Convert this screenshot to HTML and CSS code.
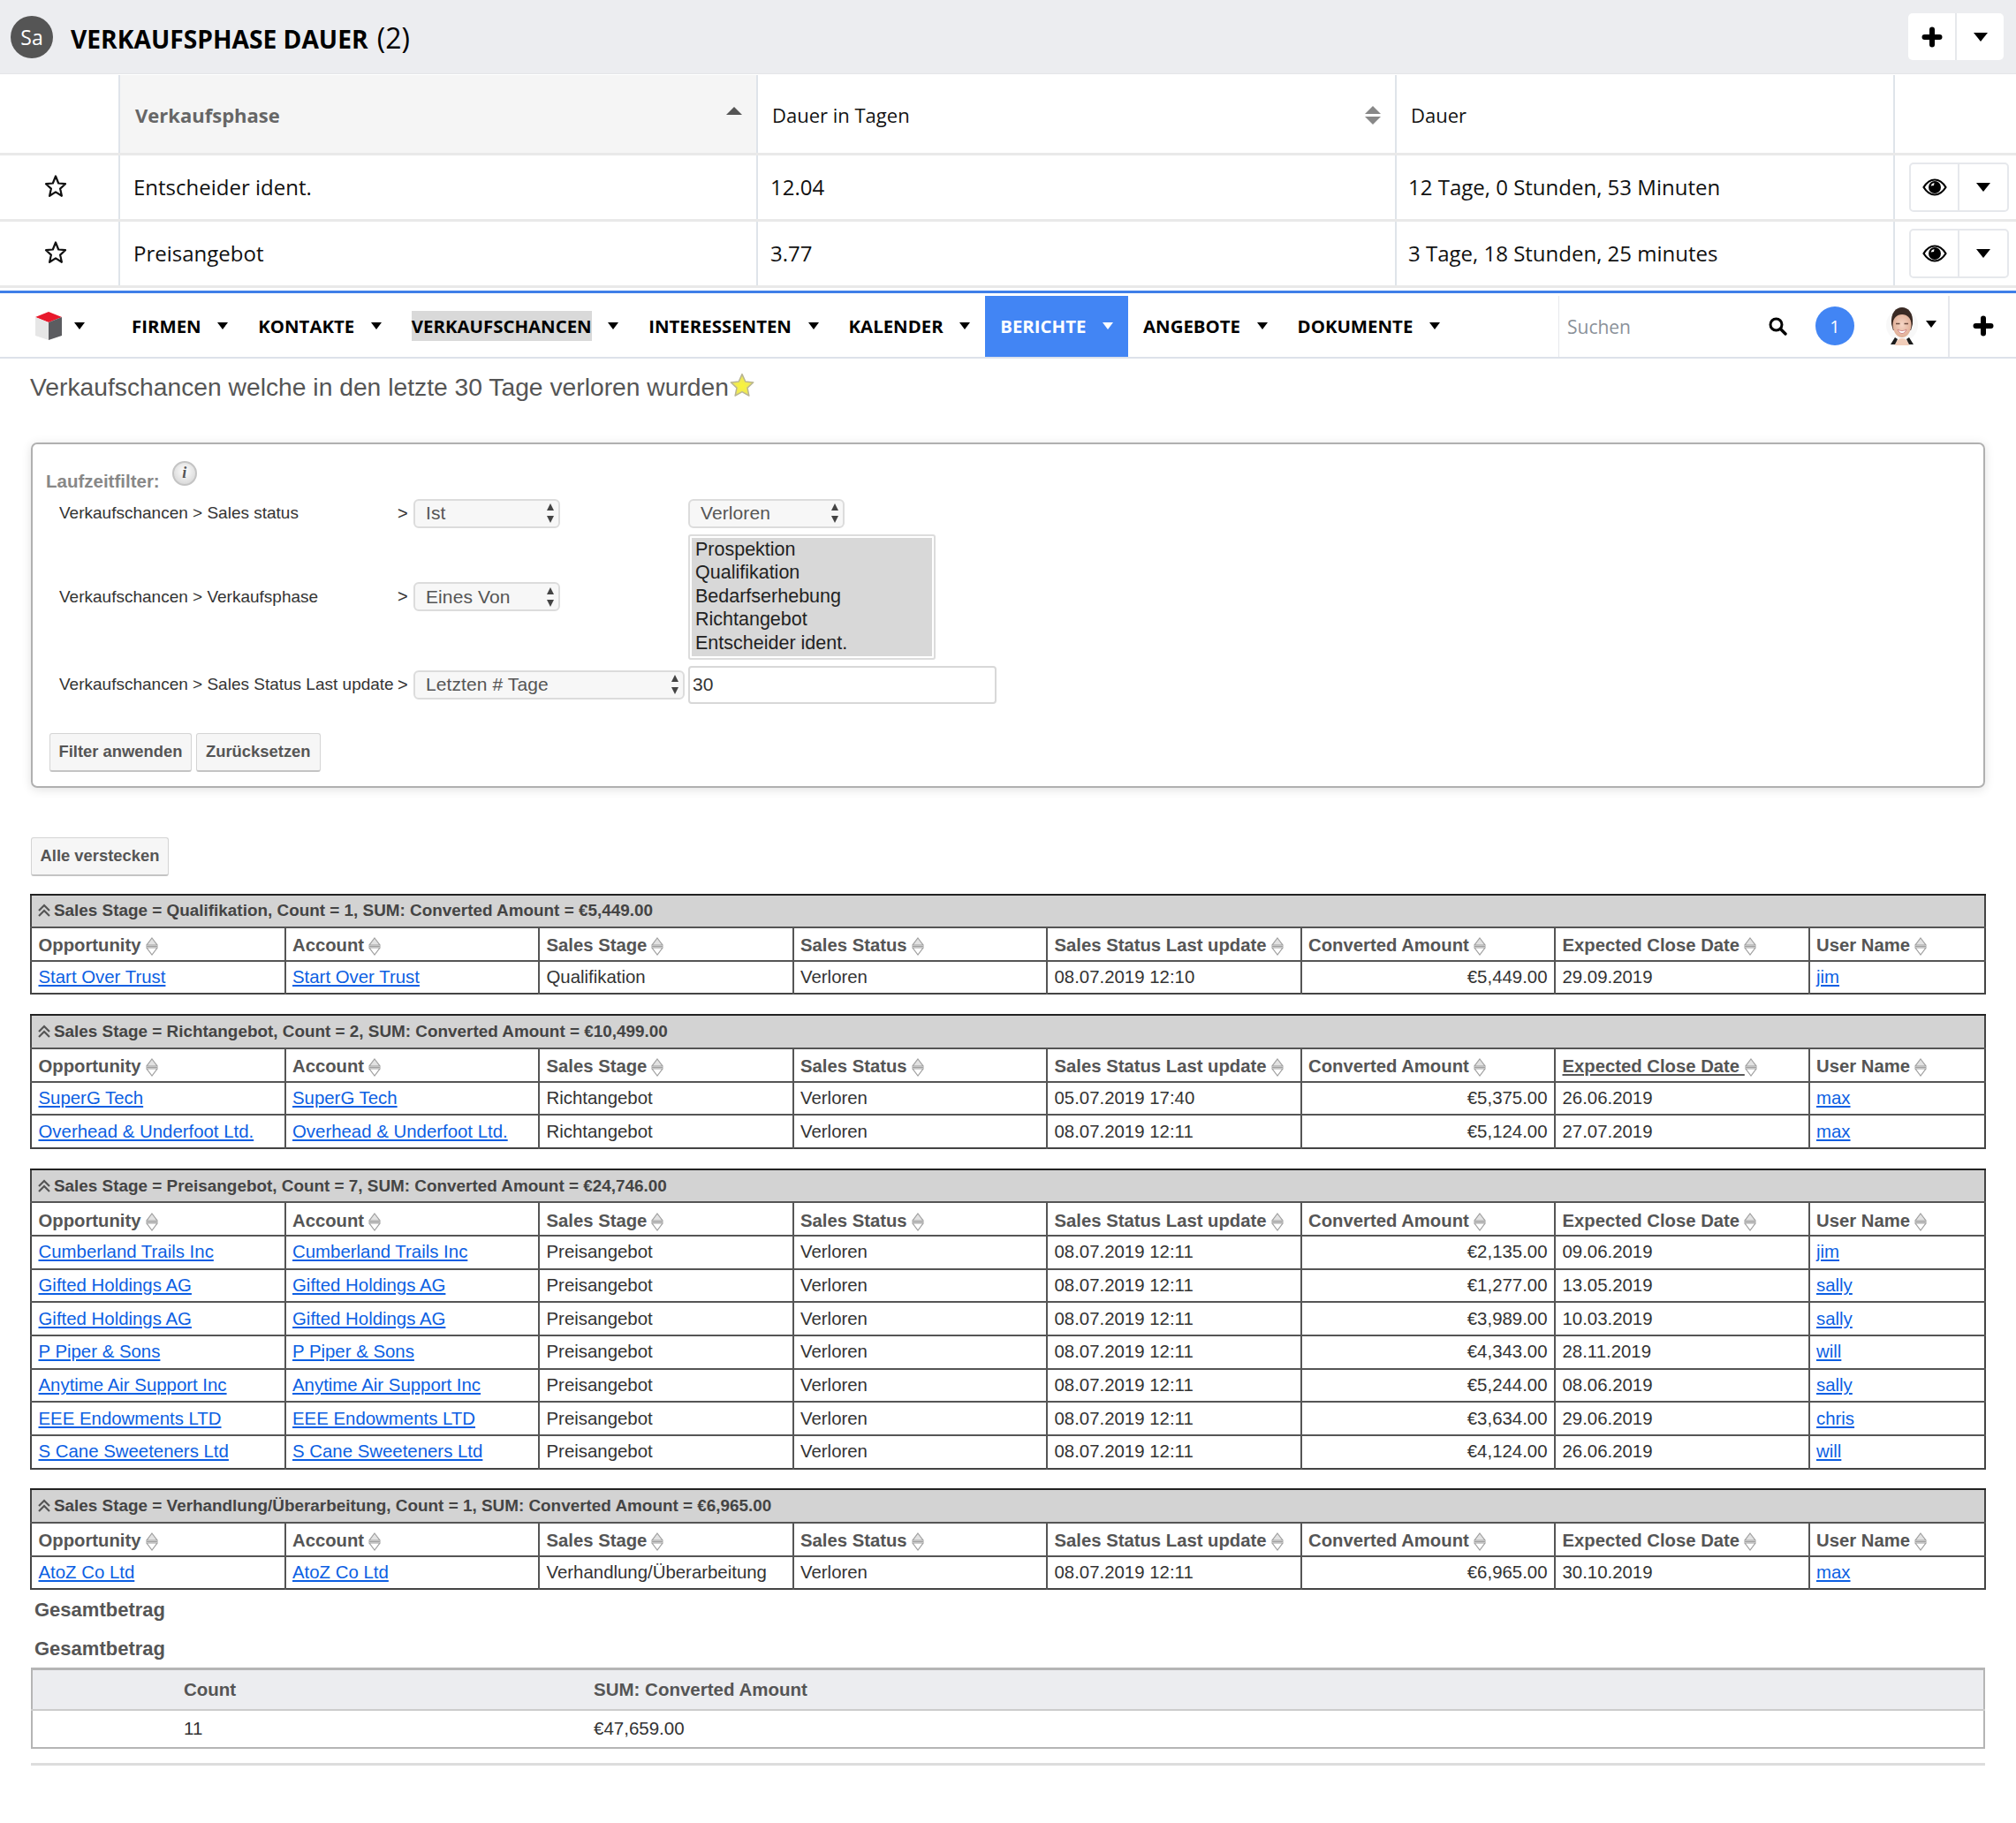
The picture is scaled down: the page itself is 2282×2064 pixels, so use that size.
FILE: index.html
```html
<!DOCTYPE html>
<html lang="de">
<head>
<meta charset="utf-8">
<title>Verkaufschancen</title>
<link rel="stylesheet" href="styles.css">
</head>
<body>
<svg class="defs" width="0" height="0">
  <defs>
    <radialGradient id="goldfill" cx="50%" cy="55%" r="55%"><stop offset="0" stop-color="#f9f43a"/><stop offset=".7" stop-color="#eee85a"/><stop offset="1" stop-color="#d8d48a"/></radialGradient>
    <radialGradient id="skin" cx="50%" cy="45%" r="65%"><stop offset="0" stop-color="#f5d6c6"/><stop offset="1" stop-color="#dca68c"/></radialGradient>
  </defs>
  <symbol id="star" viewBox="0 0 26 28"><path d="M13 2.500l3.200 8 7.800.7-5.900 5.400 1.800 8.200-6.900-4.400-6.900 4.400 1.800-8.200L2 11.200l7.800-.7z" fill="none" stroke="#111" stroke-width="2.200" stroke-linejoin="round"/></symbol>
  <symbol id="plus" viewBox="0 0 24 24"><path d="M12 3.500v17M3.500 12h17" fill="none" stroke="#000" stroke-width="6" stroke-linecap="round"/></symbol>
  <symbol id="eye" viewBox="0 0 28 20"><path d="M1.500 10C5 4.300 9.300 1.500 14 1.500S23 4.300 26.500 10C23 15.700 18.700 18.500 14 18.500S5 15.700 1.500 10z" fill="#fff" stroke="#000" stroke-width="2.200"/><circle cx="14" cy="10" r="7" fill="#000"/><path d="M9.500 8.500a5 5 0 0 1 4-3.500l-.5 3z" fill="#fff"/></symbol>
  <symbol id="sort" viewBox="0 0 14 21"><path d="M7 1L13 9H1z" fill="#e2e2e2" stroke="#a0a0a0" stroke-width="1.200"/><path d="M.5 10.500h13" stroke="#a0a0a0" stroke-width="1.400"/><path d="M1 12h12L7 20z" fill="#fff" stroke="#a0a0a0" stroke-width="1.200"/></symbol>
  <symbol id="chev" viewBox="0 0 16 18"><path d="M2 9l6-6 6 6M2 15l6-6 6 6" fill="none" stroke="#555" stroke-width="2.200"/></symbol>
  <symbol id="updown" viewBox="0 0 10 24"><path d="M5 1l4 8H1zM5 23l-4-8h8z" fill="#444"/></symbol>
</svg>

<header class="hd">
  <span class="avatar">Sa</span>
  <h2 class="hd-title"><b>VERKAUFSPHASE DAUER</b> (2)</h2>
  <div class="btn-group hd-btns">
    <span class="btn-part wide"><svg class="ico-plus"><use href="#plus"/></svg></span>
    <span class="btn-part"><i class="caret"></i></span>
  </div>
</header>

<table class="list">
  <colgroup><col class="c1"><col class="c2"><col class="c3"><col class="c4"><col class="c5"></colgroup>
  <thead>
    <tr>
      <th class="blank"></th>
      <th class="sorted"><span class="th-in">Verkaufsphase<i class="tri-up"></i></span></th>
      <th><span class="th-in">Dauer in Tagen<span class="both"><i class="tri-up grey"></i><i class="tri-down grey"></i></span></span></th>
      <th>Dauer</th>
      <th></th>
    </tr>
  </thead>
  <tbody>
    <tr>
      <td class="blank"><svg class="ico-star"><use href="#star"/></svg></td>
      <td>Entscheider ident.</td>
      <td>12.04</td>
      <td>12 Tage, 0 Stunden, 53 Minuten</td>
      <td class="act"><div class="btn-group row-btns"><span class="btn-part wide"><svg class="ico-eye"><use href="#eye"/></svg></span><span class="btn-part"><i class="caret"></i></span></div></td>
    </tr>
    <tr>
      <td class="blank"><svg class="ico-star"><use href="#star"/></svg></td>
      <td>Preisangebot</td>
      <td>3.77</td>
      <td>3 Tage, 18 Stunden, 25 minutes</td>
      <td class="act"><div class="btn-group row-btns"><span class="btn-part wide"><svg class="ico-eye"><use href="#eye"/></svg></span><span class="btn-part"><i class="caret"></i></span></div></td>
    </tr>
  </tbody>
</table>

<nav class="nav">
  <div class="brand">
    <svg class="logo" viewBox="0 0 34 34"><path d="M17 1L32 7 17 13 2 7z" fill="#e8192c"/><path d="M2 7l15 6v20L2 28z" fill="#e6e6e6"/><path d="M32 7v21l-15 5V13z" fill="#5b5c60"/></svg>
    <i class="caret"></i>
  </div>
  <a class="item"><span>FIRMEN</span><i class="caret"></i></a>
  <a class="item"><span>KONTAKTE</span><i class="caret"></i></a>
  <a class="item"><span class="mark">VERKAUFSCHANCEN</span><i class="caret"></i></a>
  <a class="item"><span>INTERESSENTEN</span><i class="caret"></i></a>
  <a class="item"><span>KALENDER</span><i class="caret"></i></a>
  <a class="item active"><span>BERICHTE</span><i class="caret"></i></a>
  <a class="item"><span>ANGEBOTE</span><i class="caret"></i></a>
  <a class="item"><span>DOKUMENTE</span><i class="caret"></i></a>
  <div class="search">
    <span class="placeholder">Suchen</span>
    <svg class="ico-search" viewBox="0 0 22 22"><circle cx="9.500" cy="9.500" r="6.500" fill="none" stroke="#000" stroke-width="3"/><path d="M14.500 14.500L20 20" stroke="#000" stroke-width="3.400" stroke-linecap="round"/></svg>
    <span class="badge">1</span>
    <svg class="face" viewBox="0 0 36 44">
      <circle cx="18" cy="21" r="18" fill="#f8f8f8"/>
      <path d="M6 20C5 7 11 1 18 1s13 6 12 19l-2 7H8z" fill="#3a2a24"/>
      <path d="M7.500 20C8 13 12 9 18 9s10 4 10.500 11c0 9-5 15-10.500 15S7.500 29 7.500 20z" fill="url(#skin)"/>
      <path d="M11 19.500h4.500M20.500 19.500H25" stroke="#6b4a3e" stroke-width="1.600"/>
      <path d="M13 26c3 2 7 2 10 0-1 3-3 4.500-5 4.500s-4-1.500-5-4.500z" fill="#fff" stroke="#c8737a" stroke-width=".8"/>
      <path d="M10 44c1-5 4-8 8-8s7 3 8 8z" fill="#f1cdb9"/>
      <path d="M5 43l5-8 3 2-3 6zM31 43l-5-8-3 2 3 6z" fill="#1c1c1c"/>
    </svg>
    <i class="caret"></i>
  </div>
  <div class="nav-plus"><svg class="ico-plus"><use href="#plus"/></svg></div>
</nav>

<main class="main">
  <h1 class="title">Verkaufschancen welche in den letzte 30 Tage verloren wurden<svg class="gold" viewBox="0 0 26 26"><path d="M13 1.500l3.500 7.800 8.300.9-6.200 5.700 1.700 8.300-7.300-4.200-7.300 4.200 1.700-8.300L1.200 10.200l8.300-.9z" fill="url(#goldfill)" stroke="#b9b592" stroke-width="1.400" stroke-linejoin="round"/></svg></h1>

  <section class="card">
    <div class="rt"><b>Laufzeitfilter:</b><span class="info">i</span></div>
    <div class="fgrid">
      <span class="flabel">Verkaufschancen &gt; Sales status</span><span class="gt">&gt;</span>
      <div class="sel s-small"><span>Ist</span><svg class="updown"><use href="#updown"/></svg></div>
      <div class="sel s-val"><span>Verloren</span><svg class="updown"><use href="#updown"/></svg></div>

      <span class="flabel">Verkaufschancen &gt; Verkaufsphase</span><span class="gt">&gt;</span>
      <div class="sel s-small"><span>Eines Von</span><svg class="updown"><use href="#updown"/></svg></div>
      <div class="multi"><div class="multi-in"><span>Prospektion</span><span>Qualifikation</span><span>Bedarfserhebung</span><span>Richtangebot</span><span>Entscheider ident.</span></div></div>

      <span class="flabel">Verkaufschancen &gt; Sales Status Last update</span><span class="gt">&gt;</span>
      <div class="sel"><span>Letzten # Tage</span><svg class="updown"><use href="#updown"/></svg></div>
      <div class="inp">30</div>
    </div>
    <div class="actions"><span class="gbtn">Filter anwenden</span><span class="gbtn">Zurücksetzen</span></div>
  </section>

  <span class="gbtn hide">Alle verstecken</span>

  <table class="rep">
    <colgroup><col class="r"><col class="r"><col class="r"><col class="r"><col class="r"><col class="r"><col class="r"><col class="rl"></colgroup>
    <tr class="grp"><td colspan="8"><svg class="chev"><use href="#chev"/></svg>Sales Stage = Qualifikation, Count = 1, SUM: Converted Amount = €5,449.00</td></tr>
    <tr class="hr"><th>Opportunity<svg class="sort"><use href="#sort"/></svg></th><th>Account<svg class="sort"><use href="#sort"/></svg></th><th>Sales Stage<svg class="sort"><use href="#sort"/></svg></th><th>Sales Status<svg class="sort"><use href="#sort"/></svg></th><th>Sales Status Last update<svg class="sort"><use href="#sort"/></svg></th><th>Converted Amount<svg class="sort"><use href="#sort"/></svg></th><th>Expected Close Date<svg class="sort"><use href="#sort"/></svg></th><th>User Name<svg class="sort"><use href="#sort"/></svg></th></tr>
    <tr><td><a>Start Over Trust</a></td><td><a>Start Over Trust</a></td><td>Qualifikation</td><td>Verloren</td><td>08.07.2019 12:10</td><td class="num">€5,449.00</td><td>29.09.2019</td><td><a>jim</a></td></tr>
  </table>

  <table class="rep">
    <colgroup><col class="r"><col class="r"><col class="r"><col class="r"><col class="r"><col class="r"><col class="r"><col class="rl"></colgroup>
    <tr class="grp"><td colspan="8"><svg class="chev"><use href="#chev"/></svg>Sales Stage = Richtangebot, Count = 2, SUM: Converted Amount = €10,499.00</td></tr>
    <tr class="hr"><th>Opportunity<svg class="sort"><use href="#sort"/></svg></th><th>Account<svg class="sort"><use href="#sort"/></svg></th><th>Sales Stage<svg class="sort"><use href="#sort"/></svg></th><th>Sales Status<svg class="sort"><use href="#sort"/></svg></th><th>Sales Status Last update<svg class="sort"><use href="#sort"/></svg></th><th>Converted Amount<svg class="sort"><use href="#sort"/></svg></th><th><u>Expected Close Date </u><svg class="sort tight"><use href="#sort"/></svg></th><th>User Name<svg class="sort"><use href="#sort"/></svg></th></tr>
    <tr><td><a>SuperG Tech</a></td><td><a>SuperG Tech</a></td><td>Richtangebot</td><td>Verloren</td><td>05.07.2019 17:40</td><td class="num">€5,375.00</td><td>26.06.2019</td><td><a>max</a></td></tr>
    <tr><td><a>Overhead &amp; Underfoot Ltd.</a></td><td><a>Overhead &amp; Underfoot Ltd.</a></td><td>Richtangebot</td><td>Verloren</td><td>08.07.2019 12:11</td><td class="num">€5,124.00</td><td>27.07.2019</td><td><a>max</a></td></tr>
  </table>

  <table class="rep">
    <colgroup><col class="r"><col class="r"><col class="r"><col class="r"><col class="r"><col class="r"><col class="r"><col class="rl"></colgroup>
    <tr class="grp"><td colspan="8"><svg class="chev"><use href="#chev"/></svg>Sales Stage = Preisangebot, Count = 7, SUM: Converted Amount = €24,746.00</td></tr>
    <tr class="hr"><th>Opportunity<svg class="sort"><use href="#sort"/></svg></th><th>Account<svg class="sort"><use href="#sort"/></svg></th><th>Sales Stage<svg class="sort"><use href="#sort"/></svg></th><th>Sales Status<svg class="sort"><use href="#sort"/></svg></th><th>Sales Status Last update<svg class="sort"><use href="#sort"/></svg></th><th>Converted Amount<svg class="sort"><use href="#sort"/></svg></th><th>Expected Close Date<svg class="sort"><use href="#sort"/></svg></th><th>User Name<svg class="sort"><use href="#sort"/></svg></th></tr>
    <tr><td><a>Cumberland Trails Inc</a></td><td><a>Cumberland Trails Inc</a></td><td>Preisangebot</td><td>Verloren</td><td>08.07.2019 12:11</td><td class="num">€2,135.00</td><td>09.06.2019</td><td><a>jim</a></td></tr>
    <tr><td><a>Gifted Holdings AG</a></td><td><a>Gifted Holdings AG</a></td><td>Preisangebot</td><td>Verloren</td><td>08.07.2019 12:11</td><td class="num">€1,277.00</td><td>13.05.2019</td><td><a>sally</a></td></tr>
    <tr><td><a>Gifted Holdings AG</a></td><td><a>Gifted Holdings AG</a></td><td>Preisangebot</td><td>Verloren</td><td>08.07.2019 12:11</td><td class="num">€3,989.00</td><td>10.03.2019</td><td><a>sally</a></td></tr>
    <tr><td><a>P Piper &amp; Sons</a></td><td><a>P Piper &amp; Sons</a></td><td>Preisangebot</td><td>Verloren</td><td>08.07.2019 12:11</td><td class="num">€4,343.00</td><td>28.11.2019</td><td><a>will</a></td></tr>
    <tr><td><a>Anytime Air Support Inc</a></td><td><a>Anytime Air Support Inc</a></td><td>Preisangebot</td><td>Verloren</td><td>08.07.2019 12:11</td><td class="num">€5,244.00</td><td>08.06.2019</td><td><a>sally</a></td></tr>
    <tr><td><a>EEE Endowments LTD</a></td><td><a>EEE Endowments LTD</a></td><td>Preisangebot</td><td>Verloren</td><td>08.07.2019 12:11</td><td class="num">€3,634.00</td><td>29.06.2019</td><td><a>chris</a></td></tr>
    <tr><td><a>S Cane Sweeteners Ltd</a></td><td><a>S Cane Sweeteners Ltd</a></td><td>Preisangebot</td><td>Verloren</td><td>08.07.2019 12:11</td><td class="num">€4,124.00</td><td>26.06.2019</td><td><a>will</a></td></tr>
  </table>

  <table class="rep last">
    <colgroup><col class="r"><col class="r"><col class="r"><col class="r"><col class="r"><col class="r"><col class="r"><col class="rl"></colgroup>
    <tr class="grp"><td colspan="8"><svg class="chev"><use href="#chev"/></svg>Sales Stage = Verhandlung/Überarbeitung, Count = 1, SUM: Converted Amount = €6,965.00</td></tr>
    <tr class="hr"><th>Opportunity<svg class="sort"><use href="#sort"/></svg></th><th>Account<svg class="sort"><use href="#sort"/></svg></th><th>Sales Stage<svg class="sort"><use href="#sort"/></svg></th><th>Sales Status<svg class="sort"><use href="#sort"/></svg></th><th>Sales Status Last update<svg class="sort"><use href="#sort"/></svg></th><th>Converted Amount<svg class="sort"><use href="#sort"/></svg></th><th>Expected Close Date<svg class="sort"><use href="#sort"/></svg></th><th>User Name<svg class="sort"><use href="#sort"/></svg></th></tr>
    <tr><td><a>AtoZ Co Ltd</a></td><td><a>AtoZ Co Ltd</a></td><td>Verhandlung/Überarbeitung</td><td>Verloren</td><td>08.07.2019 12:11</td><td class="num">€6,965.00</td><td>30.10.2019</td><td><a>max</a></td></tr>
  </table>

  <h3 class="sum-h">Gesamtbetrag</h3>
  <h3 class="sum-h">Gesamtbetrag</h3>
  <table class="sum">
    <colgroup><col class="s1"><col class="s2"><col></colgroup>
    <tr><th>Count</th><th>SUM: Converted Amount</th><th></th></tr>
    <tr><td>11</td><td>€47,659.00</td><td></td></tr>
  </table>
  <hr class="rule">
</main>
</body>
</html>
```

FILE: styles.css
```css
* { box-sizing: border-box; }
html, body { margin: 0; padding: 0; background: #fff; }
body { font-family: "Liberation Sans", Arial, sans-serif; color: #333; width: 2282px; }
.defs { position: absolute; }
i { display: inline-block; font-style: normal; }

.caret { width: 0; height: 0; border-left: 6.500px solid transparent; border-right: 6.500px solid transparent; border-top: 8px solid #000; }

/* top record header */
.hd { height: 84px; background: #ecedf0; display: flex; align-items: center; padding: 0 14px 0 12px; border-bottom: 1px solid #e4e5e8; }
.avatar { width: 48px; height: 48px; border-radius: 50%; background: #555; color: #fff; font: 400 23px "Open Sans", sans-serif; display: flex; align-items: center; justify-content: center; margin-top: 1px; }
.hd-title { margin: 2px 0 0 20px; font: 400 32px "Open Sans", sans-serif; color: #000; flex: 1; }
.hd-title b { font-weight: 700; font-size: 28.200px; margin-right: 2px; }
.btn-group { display: flex; background: #fff; border-radius: 5px; }
.btn-part { width: 53px; display: flex; align-items: center; justify-content: center; }
.btn-part.wide { width: 55px; border-right: 2px solid #e6e8ec; }
.btn-part .caret { border-left-width: 8.500px; border-right-width: 8.500px; border-top-width: 10px; }
.hd-btns { height: 53px; width: 108px; }
.ico-plus { width: 24px; height: 24px; display: block; }

/* list view */
.list { width: 2282px; border-collapse: collapse; table-layout: fixed; font-family: "Open Sans", sans-serif; color: #111; margin-top: 1px; }
.c1 { width: 135px; } .c2 { width: 722px; } .c3 { width: 723px; } .c4 { width: 564px; } .c5 { width: 138px; }
.list th { height: 89px; text-align: left; font-weight: 400; font-size: 22px; padding: 2px 16px 0; border-left: 2px solid #dfe4ea; border-bottom: 3px solid #e9e9e9; }
.list th.blank, .list td.blank { border-left: 0; padding: 0; }
.list th.sorted { background: #f5f5f5; color: #666; font-weight: 700; padding-left: 17px; }
.th-in { display: flex; align-items: center; justify-content: space-between; }
.tri-up { width: 0; height: 0; border-left: 9px solid transparent; border-right: 9px solid transparent; border-top: 0; border-bottom: 9px solid #555; margin-top: -8px; }
.tri-down { width: 0; height: 0; border-left: 9px solid transparent; border-right: 9px solid transparent; border-top: 9px solid #555; }
.both { display: flex; flex-direction: column; gap: 3px; margin-top: 2px; }
.both .tri-up { margin: 0; }
.grey.tri-up { border-bottom-color: #888; } .grey.tri-down { border-top-color: #888; }
.list td { height: 75px; font-size: 24px; padding: 0 14px; border-left: 2px solid #dfe4ea; border-bottom: 3px solid #e9e9e9; }
.list td:nth-child(2) { padding-left: 15px; }
.list td:nth-child(4) { padding-left: 13px; }
.ico-star { width: 26px; height: 28px; display: block; margin: -2px 0 0 50px; }
.list td.act { padding: 0 0 0 16px; }
.row-btns { height: 56px; width: 113px; border: 2px solid #e6e8ec; }
.row-btns .btn-part { width: 54px; }
.row-btns .btn-part.wide { width: 55px; }
.ico-eye { width: 28px; height: 20px; display: block; }

/* nav */
.nav { margin-top: 3px; height: 77px; border-top: 3px solid #3f7fe8; border-bottom: 2px solid #dde2ea; display: flex; align-items: stretch; padding: 3px 0 0; font-family: "Open Sans", sans-serif; }
.brand { width: 132px; display: flex; align-items: center; padding-left: 38px; gap: 12px; }
.logo { width: 34px; height: 34px; }
.item { display: flex; align-items: center; padding: 0 17px; font-size: 20.400px; font-weight: 700; color: #000; }
.item .caret { margin-left: 18.600px; }
.mark { background: #d9d9d9; padding: 3px 0; }
.item.active { background: #4285f4; color: #fff; }
.item.active .caret { border-top-color: #fff; }
.search { margin-left: auto; width: 441px; display: flex; align-items: center; border-left: 1px solid #e6e8ec; padding-left: 9px; position: relative; }
.placeholder { font-size: 21px; color: #8a9199; width: 227px; padding-top: 2px; }
.ico-search { width: 22px; height: 22px; }
.badge { width: 44px; height: 44px; border-radius: 50%; background: #4285f4; color: #fff; font-size: 20px; display: flex; align-items: center; justify-content: center; margin-left: 32px; }
.face { width: 36px; height: 44px; margin-left: 36px; }
.search .caret { margin-left: 9px; margin-top: -4px; }
.nav-plus { width: 77px; border-left: 2px solid #e6e8ec; display: flex; align-items: center; justify-content: center; }

/* main */
.main { padding: 0 35px; }
.title { margin: 14px 0 0 -1px; font-size: 28.250px; font-weight: 400; color: #555; line-height: 36px; display: flex; align-items: flex-start; }
.gold { width: 28px; height: 28px; margin: 2px 0 0 1px; }
.card { margin-top: 45px; height: 391px; border: 2px solid #b0b0b0; border-radius: 7px; box-shadow: 0 2px 12px rgba(0,0,0,.12); padding: 20px 16px 0 15px; }
.rt { display: flex; align-items: flex-start; height: 42px; gap: 14px; font-size: 20.500px; color: #888; }
.rt b { margin-top: 10px; }
.info { width: 28px; height: 28px; margin-top: -1px; border-radius: 50%; background: radial-gradient(circle at 50% 40%, #fff, #cfcfcf); border: 2px solid #c4c4c4; color: #555; font: italic 700 18px "Liberation Serif", serif; display: flex; align-items: center; justify-content: center; }
.fgrid { display: grid; grid-template-columns: 383px 18px 307px 350px; column-gap: 0; row-gap: 7px; align-items: center; padding-left: 15px; }
.flabel { font-size: 19px; color: #333; }
.gt { font-size: 20px; color: #333; }
.sel { height: 33px; background: #f7f7f7; border: 2px solid #dcdcdc; border-radius: 6px; font-size: 21px; letter-spacing: .1px; color: #555; display: flex; align-items: center; justify-content: space-between; padding: 0 4px 0 12px; }
.s-small { width: 166px; }
.s-val { width: 177px; }
.fgrid > :nth-child(4n) { margin-left: 4px; }
.updown { width: 10px; height: 24px; }
.multi { width: 280px; height: 142px; border: 2px solid #dcdcdc; border-radius: 3px; padding: 2px; }
.multi-in { height: 100%; background: #d8d8d8; padding: 0 4px; font-size: 21.500px; color: #222; display: flex; flex-direction: column; }
.multi-in span { line-height: 26.600px; }
.inp { width: 349px; height: 43px; border: 2px solid #d8d8d8; border-radius: 4px; font-size: 21px; color: #333; display: flex; align-items: center; padding-left: 3px; }
.actions { display: flex; gap: 5px; margin-top: 33px; padding-left: 4px; }
.gbtn { display: inline-flex; align-items: center; height: 44px; padding: 0 9.500px; background: #f6f6f6; border: 1px solid #d4d4d4; border-bottom: 2px solid #c4c4c4; border-radius: 3px; font-size: 18.400px; font-weight: 700; color: #555; }
.gbtn + .gbtn { padding: 0 10px; }
.hide { margin-top: 56px; display: flex; width: 156px; justify-content: center; padding: 0; }

/* report tables */
.rep { width: 2212px; border-collapse: collapse; table-layout: fixed; margin: 21.800px 0 0 -1px; border: 2px solid #444; font-size: 20.400px; }
.hide + .rep { margin-top: 20px; }
.r { width: 287.500px; } .rl { width: 199.500px; }
.rep tr { height: 37.670px; }
.rep td, .rep th { padding: 0 7.500px; border: 1px solid #555; border-width: 2px 2px 0 0; text-align: left; white-space: nowrap; overflow: hidden; }
.rep td:last-child, .rep th:last-child { border-right: 0; }
.rep th { font-size: 20.300px; color: #555; font-weight: 700; padding-top: 4px; }
.rep .grp td { background: #d3d3d3; color: #444; font-size: 18.900px; font-weight: 700; padding-left: 6px; border-top: 2px solid #222; }
.chev { width: 16px; height: 18px; vertical-align: -3px; margin-right: 3px; }
.sort { width: 14px; height: 21px; vertical-align: -5px; margin-left: 5px; }
.sort.tight { margin-left: 0; }
.rep a { color: #0c5fe3; text-decoration: underline; }
.rep .num { text-align: right; }
.sum-h { margin: 0; font-size: 22px; font-weight: 700; color: #555; padding-left: 4px; line-height: 44px; }
.sum-h:first-of-type { margin-top: 1px; }
.sum { width: 2212px; border-collapse: collapse; table-layout: fixed; font-size: 20.500px; border: 2px solid #b5b5b5; border-top-width: 3px; margin-top: -1px; }
.s1 { width: 635px; } .s2 { width: 1000px; }
.sum th { height: 46px; background: #ecedf0; color: #555; font-weight: 700; text-align: left; border-bottom: 2px solid #ccc; }
.sum td { height: 43px; color: #333; }
.sum th:first-child, .sum td:first-child { padding-left: 171px; }
.rule { margin: 16px 0 0; height: 3px; border: 0; background: #ddd; }
```
